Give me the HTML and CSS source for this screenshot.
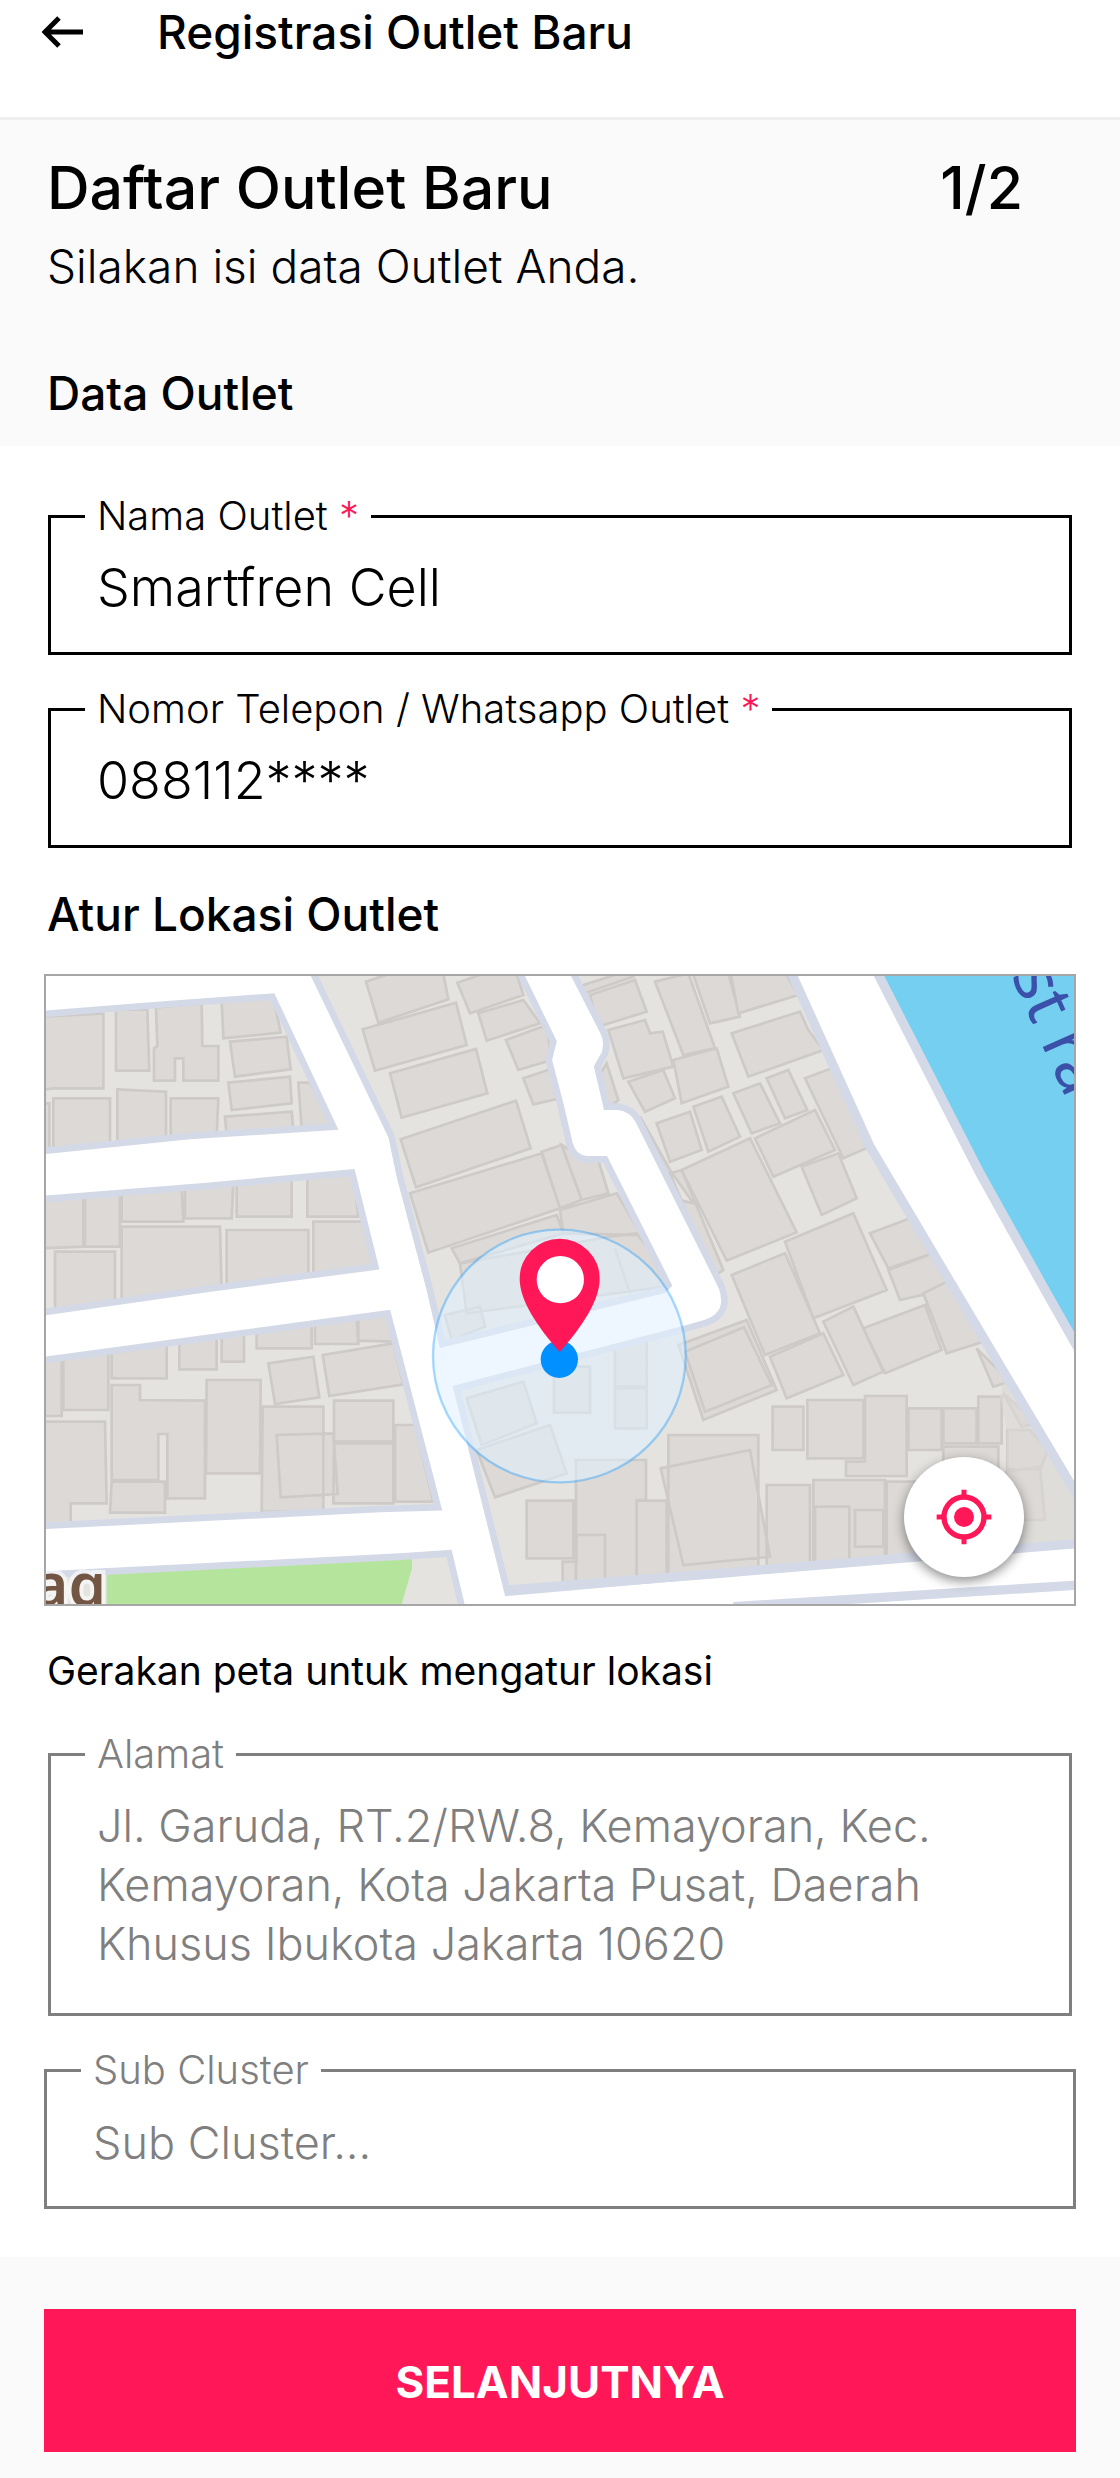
FILE: index.html
```html
<!DOCTYPE html>
<html lang="id">
<head>
<meta charset="utf-8">
<meta name="viewport" content="width=device-width, initial-scale=1">
<title>Registrasi Outlet Baru</title>
<link rel="stylesheet" href="styles.css">
</head>
<body>
<header class="topbar">
  <button class="back" type="button" aria-label="Kembali">
    <svg viewBox="0 0 42 32" aria-hidden="true"><path d="M17 2 3 16 17 30M3 16H41"/></svg>
  </button>
  <h1 class="topbar-title">Registrasi Outlet Baru</h1>
</header>

<form class="form">
  <section class="intro">
    <div class="intro-head">
      <h2 class="title">Daftar Outlet Baru</h2>
      <span class="step">1/2</span>
    </div>
    <p class="lead">Silakan isi data Outlet Anda.</p>
    <h3 class="subhead">Data Outlet</h3>
  </section>

  <div class="body">
    <fieldset class="field">
      <legend><label for="nama">Nama Outlet <span class="req">*</span></label></legend>
      <input id="nama" type="text" value="Smartfren Cell">
    </fieldset>
    <fieldset class="field">
      <legend><label for="telepon">Nomor Telepon / Whatsapp Outlet <span class="req">*</span></label></legend>
      <input id="telepon" type="text" value="088112****">
    </fieldset>

    <h3 class="subhead location-head">Atur Lokasi Outlet</h3>
    <div class="map">
      <svg class="map-art" viewBox="18 18 3084 1884" role="img" aria-label="Peta lokasi outlet">
        <defs>
          <path id="blocks" d="M0 133 350 105 697 80 880 470 450 498 0 544ZM0 688 500 648 936 608 1006 890 500 957 0 1028ZM0 1172 1043 1030 1194 1612 1020 1617 0 1668ZM0 1815 190 1805 1080 1760 1227 1750 1268 1920H0ZM815 0 1055 500 1080 620 1170 960 1207 1122 1870 960 1885 945 1695 568 1640 568Q1600 565 1588 520L1560 400 1526 270 1540 215 1435 0ZM1595 0 1690 185Q1705 215 1695 250L1672 290 1700 410H1735Q1775 415 1795 450L2045 950Q2075 1030 2000 1058L1940 1075 1250 1255 1403 1868 2040 1812 3120 1722V1590L2745 960 2490 530 2250 0Z"/>
          <clipPath id="land"><use href="#blocks"/></clipPath>
        </defs>
        <rect width="3120" height="1920" fill="#fff"/>
        <use href="#blocks" fill="#e4e3df"/>
        <path d="M200 1805 1116 1764V1795L1080 1920H200Z" fill="#b5e59c"/>
        <g class="houses" clip-path="url(#land)">
          <path d="M0 140 190 130V355H40L0 360ZM228 120 322 118 328 302H228ZM348 112 485 100 487 228H535V332H430V265H405V332H342V235L352 228ZM545 95 700 80 722 188 550 205ZM570 215 740 200 752 298 585 320ZM565 338 750 320 755 400 575 420ZM555 440 755 425 760 480 560 495ZM775 338H810L880 470 785 475ZM40 385H210V530L40 535ZM232 358 378 365V510L232 530ZM392 385H535L530 500 392 510ZM0 400H28V540H0Z"/>
          <path d="M0 690 130 680V830L0 835ZM135 680 240 670V830H135ZM245 670 425 650 430 755H245ZM435 645 580 640 575 745H435ZM590 640 755 620V740H590ZM802 615 940 600 955 740H802ZM245 770H540L545 970 245 1000ZM45 845H225V1000L45 1030ZM560 780H805V925L560 945ZM820 755H970L1006 895 820 920Z"/>
          <path transform="translate(0 960)" d="M0 205H65V378H0ZM70 205 205 185V360H70ZM215 180 380 165V265H215ZM418 155 530 140V238H418ZM545 140 612 130V215H545ZM650 130 815 100V175H650ZM825 100 950 80 955 162H825ZM955 80 1045 60 1065 155 955 152ZM685 220 820 200 838 322 705 342ZM848 195 1060 160 1090 283 868 318ZM215 285H300V330L495 332V625H382V432H355V570H215ZM215 575H375V668H210ZM500 270H662L660 550H498ZM0 395H195L200 640H92V710H0ZM668 350H850V665H665ZM710 435 880 430 893 612 722 622ZM882 332H1060V455H882ZM882 460H1060V640H880ZM1065 405H1125L1180 635H1065Z"/>
          <path transform="translate(1020 0)" d="M-42 35 180-40 205 88-5 158ZM-52 178 228 98 260 225-15 302ZM30 310 288 237 322 370 65 443ZM232 38 400-20 430 75 270 130ZM295 130 430 90 480 160 320 212ZM378 210 500 165 515 270 415 300ZM430 325 510 298 540 385 460 403ZM62 508 408 392 452 535 108 652ZM90 670 485 550 540 715 145 848ZM485 545 545 525 605 690 540 715ZM545 525 620 570H655L685 670 605 690ZM540 720 710 670 785 795 550 790ZM215 835 530 735 550 790 240 880ZM240 880 690 800 770 790 890 945 260 1030ZM705 835 750 970M195 1035 300 1010 315 1070 215 1110Z"/>
          <path transform="translate(1020 0)" d="M580 55 750 0 760 20 600 75ZM630 75 765 30 800 125 655 170ZM685 180 795 150 810 190 848 185 880 290 730 325ZM825 35 925 10 1005 235 910 255ZM935 0 1040-10 1080 140 990 160ZM880 270 1010 235 1045 350 905 400ZM745 335 850 300 885 385 795 425ZM680 280 715 390 690 410 650 330ZM830 460 930 425 965 540 870 575ZM940 410 1025 380 1080 500 985 545ZM780 440 900 690 940 700 870 600ZM905 600 1110 505 1250 787 1040 872ZM870 610 905 600 1030 900 1000 920Z"/>
          <path transform="translate(2040 0)" d="M30 0 180-20 235 75 55 130ZM35 190 240 125 265 180 310 240 85 320ZM40 370 120 340 180 460 95 490ZM140 325 205 300 262 420 195 445ZM255 325 335 295 450 530 370 565ZM105 505 285 420 345 540 160 620ZM245 590 355 550 410 685 305 735ZM195 815 400 730 500 960 280 1045ZM450 790 570 745 640 850 505 895ZM505 900 640 850 720 950 540 990ZM35 915 195 850 300 1090 135 1155Z"/>
          <path transform="translate(2040 960)" d="M150 200 310 130 370 255 200 325ZM-125 165 80 90 170 300-50 390ZM-105 185 72 112 155 285-45 365ZM310 95 400 50 490 245 400 285ZM430 115 615 45 665 180 495 250ZM610 10 690-30 790 155 680 190ZM770 175 870 275 820 290ZM850 310 950 400 905 410ZM158 350H250V480H158ZM262 330H430V505H262ZM435 318H560V558H378V515H435ZM565 355H665V480H565ZM670 355H770V460H670ZM775 320H845V460H775ZM670 470H835V600H670ZM862 420H930L985 480 960 538H862ZM-155 435H115V880H-155ZM-178 535 90 480 150 800-110 825ZM140 585H270V880H140ZM280 570H495V860H280ZM285 650H388V860H285ZM405 660H490V770H405ZM500 575H640V840H500ZM860 545 960 530 975 690H870Z"/>
          <path transform="translate(1020 960)" d="M260 325 430 275 470 400 305 465ZM290 480 510 405 560 550 345 622ZM522 230H630V368H522ZM705 170 800 150V290H705ZM705 295H800V415H705ZM588 510H798V630H770V920H588ZM440 632H580V805H440ZM548 815H590V735H675V920H548ZM770 632H860V920H770Z"/>
          <path transform="translate(2040 960)" d="M860 250 1090 560V800L640 840V600H860V420L840 320Z" stroke="none" fill-opacity=".6"/>
        </g>
        <use href="#blocks" fill="none" stroke="#d4d9e8" stroke-width="20"/>
        <path d="M2250 0 2490 530 2745 960 3120 1590M1400 1860 2040 1810 3120 1720M2080 1910 3120 1845" fill="none" stroke="#d4d9e8" stroke-width="28"/>
        <path d="M2508 0 2820 610 3015 960 3120 1145V0Z" fill="#75cff0" stroke="#d4d9e8" stroke-width="28"/>
        <text class="map-river" transform="translate(2912 14) rotate(66)">st ra</text>
        <text class="map-place" x="198" y="1908" text-anchor="end">ag</text>
        <circle cx="1558" cy="1158" r="379" fill="#e1f1ff" fill-opacity=".57" stroke="#0090ff" stroke-opacity=".34" stroke-width="7"/>
        <circle cx="1558" cy="1168" r="56" fill="#0090ff"/>
        <path d="M1559 1146C1490 1068 1439 990 1439 926A120 120 0 0 1 1679 926C1679 990 1628 1068 1559 1146Z" fill="#ff1757"/>
        <circle cx="1561" cy="929" r="71" fill="#fff"/>
      </svg>
      <button class="locate" type="button" aria-label="Lokasi saya">
        <svg viewBox="-84 -84 168 168" aria-hidden="true">
          <circle r="60" fill="none" stroke="#ff1757" stroke-width="16"/>
          <circle r="30" fill="#ff1757"/>
          <path d="M0-82V-60M0 60V82M-82 0H-60M60 0H82" stroke="#ff1757" stroke-width="15"/>
        </svg>
      </button>
    </div>
    <p class="hint">Gerakan peta untuk mengatur lokasi</p>

    <fieldset class="field muted">
      <legend><label for="alamat">Alamat</label></legend>
      <textarea id="alamat" rows="3" readonly>Jl. Garuda, RT.2/RW.8, Kemayoran, Kec.
Kemayoran, Kota Jakarta Pusat, Daerah
Khusus Ibukota Jakarta 10620</textarea>
    </fieldset>
    <fieldset class="field muted wide">
      <legend><label for="cluster">Sub Cluster</label></legend>
      <input id="cluster" type="text" placeholder="Sub Cluster...">
    </fieldset>
  </div>

  <footer class="actions">
    <button class="next" type="submit">SELANJUTNYA</button>
  </footer>
</form>
</body>
</html>
```
FILE: styles.css
```css
* { box-sizing: border-box; }

body {
  margin: 0;
  background: #fff;
  color: #000;
  font-family: Inter, "Noto Sans", sans-serif;
}

h1, h2, h3, p { margin: 0; font-weight: 500; }

button, input, textarea { font-family: inherit; }

.topbar {
  display: flex;
  align-items: center;
  gap: 73px;
  padding: 8px 42px 61px;
  border-bottom: 3px solid #efefef;
}

.back {
  display: flex;
  padding: 0;
  border: 0;
  background: none;
}

.back svg {
  width: 42px;
  height: 32px;
  fill: none;
  stroke: #000;
  stroke-width: 5;
}

.topbar-title { font-size: 46px; line-height: 48px; }

.intro {
  padding: 38px 97px 29px 47px;
  background: #fafafa;
}

.intro-head {
  display: flex;
  justify-content: space-between;
  font-size: 59px;
  line-height: 60px;
}

.title { font-size: inherit; }
.step { font-weight: 500; }

.lead {
  margin-top: 24px;
  font-size: 46px;
  font-weight: 300;
  line-height: 48px;
}

.subhead { font-size: 46px; line-height: 48px; }
.intro .subhead { margin-top: 79px; }

.body { padding: 52px 44px 48px; }

.field {
  min-width: 0;
  margin: 0 4px 36px;
  padding: 0;
  border: 3px solid #000;
}

.field legend {
  margin-left: 34px;
  padding: 0 12px;
  font-size: 40px;
  font-weight: 300;
  line-height: 36px;
}

.req { color: #ff1757; }

.field input,
.field textarea {
  display: block;
  width: 100%;
  border: 0;
  outline: 0;
  background: none;
  color: inherit;
  font-weight: 300;
}

.field input {
  height: 118px;
  padding: 0 46px 12px;
  font-size: 52px;
}

.field textarea {
  padding: 24px 46px 40px;
  font-size: 45px;
  line-height: 59px;
  resize: none;
  overflow: hidden;
}

.muted { border-color: #7f7f7f; color: #7f7f7f; }
.muted input { padding-bottom: 10px; font-size: 45px; }
.muted input::placeholder { color: #7f7f7f; opacity: 1; }
.wide { margin: 0; }

.location-head { margin: 42px 3px 36px; }

.map {
  position: relative;
  border: 2px solid #a6a6a6;
}

.map-art { display: block; width: 100%; height: auto; }

.houses {
  fill: #dcd9d6;
  stroke: #cdcac7;
  stroke-width: 8;
}

.map-river {
  fill: #3b50a8;
  font: 400 200px "Noto Sans", sans-serif;
}

.map-place {
  fill: #735544;
  stroke: #fff;
  stroke-opacity: .6;
  stroke-width: 24;
  paint-order: stroke;
  font: 600 180px "Noto Sans", sans-serif;
}

.locate {
  position: absolute;
  right: 50px;
  bottom: 27px;
  display: grid;
  place-items: center;
  width: 120px;
  height: 120px;
  padding: 0;
  border: 0;
  border-radius: 50%;
  background: #fff;
  box-shadow: 0 4px 12px rgba(0, 0, 0, .45);
}

.locate svg { width: 56px; height: 56px; }

.hint {
  margin: 45px 3px;
  font-size: 39px;
  font-weight: 400;
  line-height: 40px;
}

.actions {
  padding: 52px 44px 26px;
  background: #fafafa;
}

.next {
  display: block;
  width: 100%;
  height: 143px;
  padding: 2px 0 0;
  border: 0;
  background: #ff1757;
  color: #fff;
  font-size: 44px;
  font-weight: 700;
}
```
